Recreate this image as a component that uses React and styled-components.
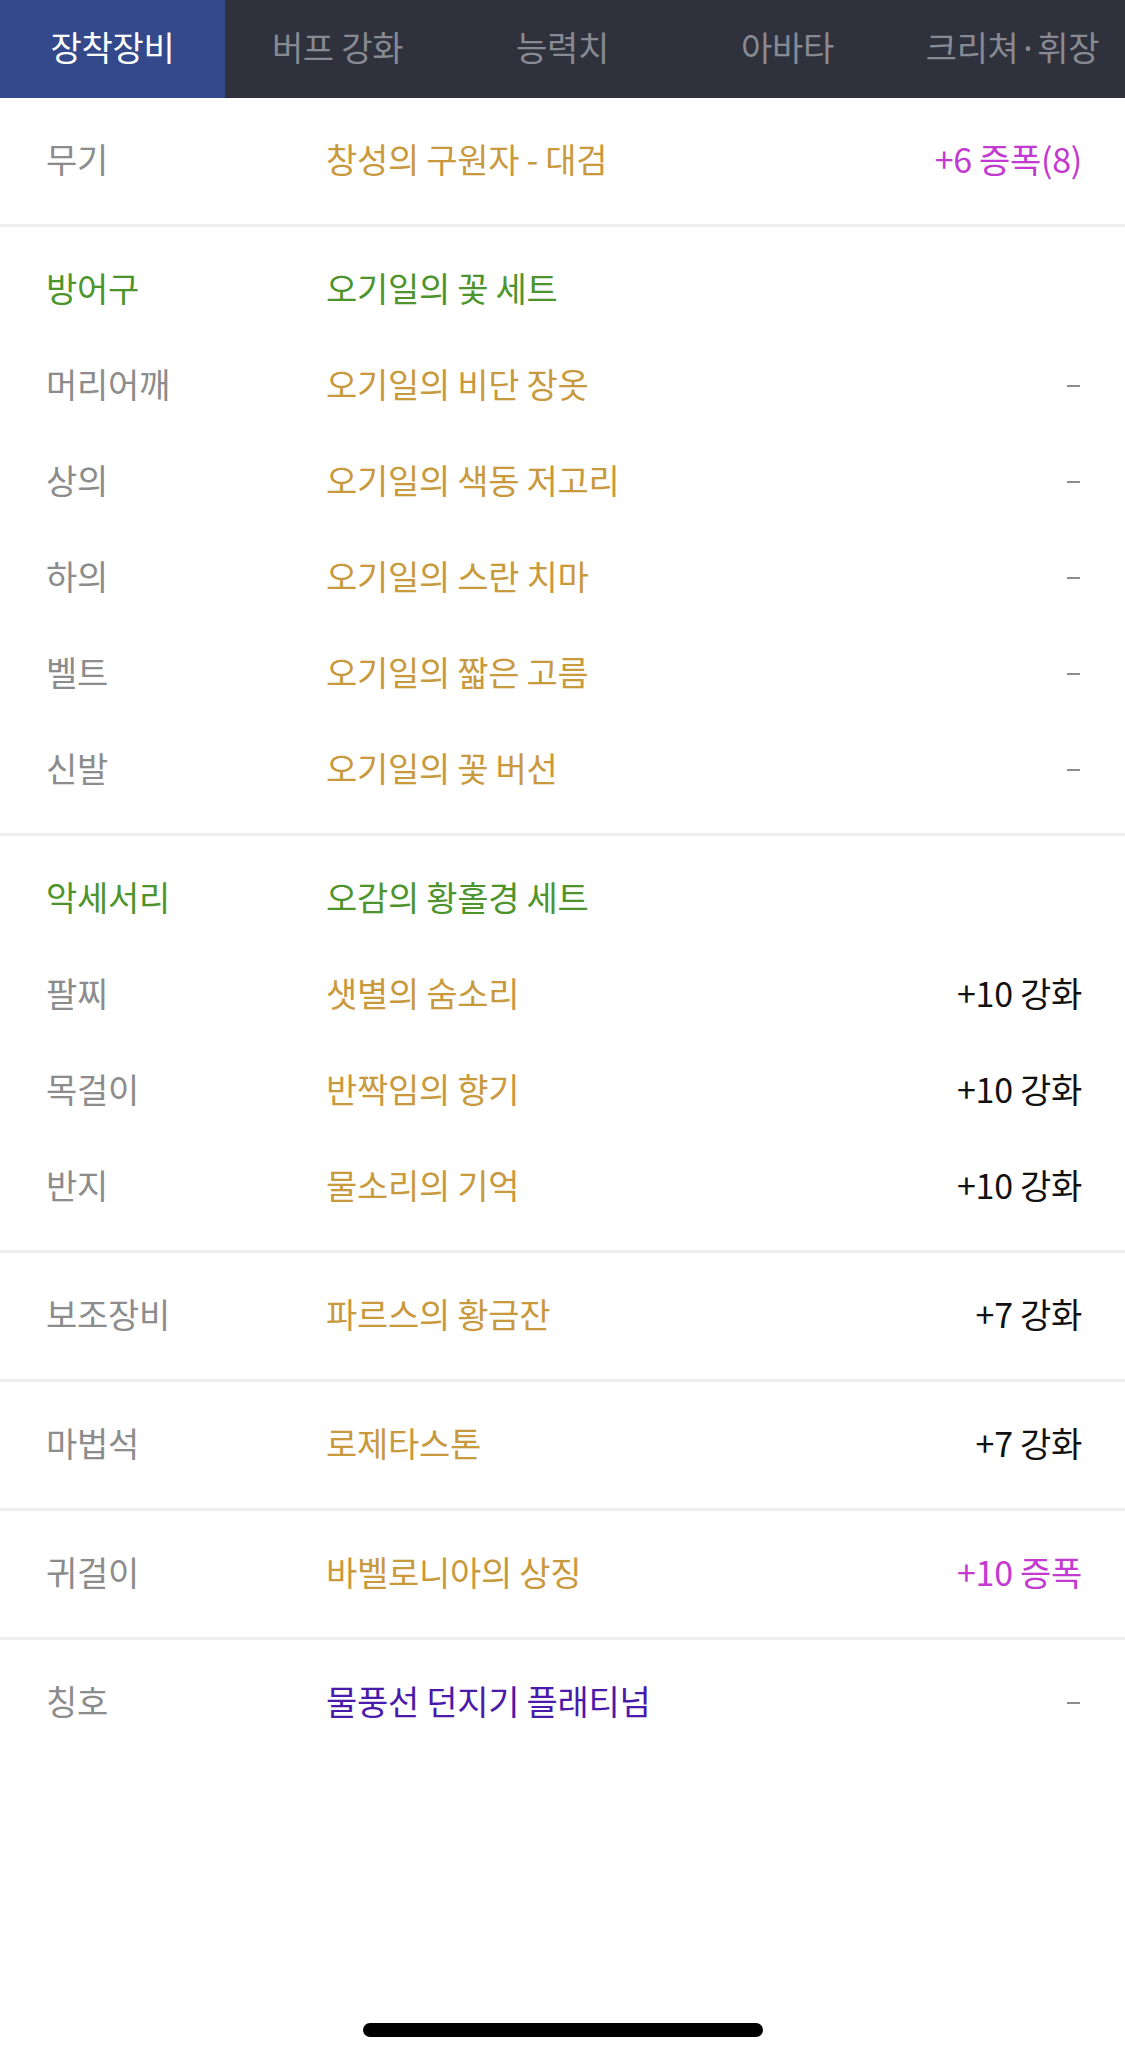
import React from "react";
import styled, { createGlobalStyle } from "styled-components";

const GlobalStyle = createGlobalStyle`
  html, body { margin: 0; padding: 0; background: #ffffff; }
  body { font-family: "Noto Sans CJK KR", "Noto Sans", sans-serif; }
  * { box-sizing: border-box; }
`;

const COLORS = {
  label: "#8c8c8c",
  gold: "#c9993d",
  green: "#4e942c",
  magenta: "#c23ad0",
  purple: "#4a1aab",
  black: "#111111",
};

const Page = styled.div`
  width: 1125px;
  min-height: 2061px;
  display: flex;
  flex-direction: column;
  background: #ffffff;
`;

const TabBar = styled.nav`
  display: grid;
  grid-template-columns: repeat(5, 1fr);
  height: 98px;
  background: #2f323c;
`;

const Tab = styled.div`
  display: flex;
  align-items: center;
  justify-content: center;
  padding-bottom: 5px;
  font-size: 34px;
  letter-spacing: -0.3px;
  color: ${(p) => (p.$active ? "#ffffff" : "#878a93")};
  background: ${(p) => (p.$active ? "#34498a" : "transparent")};
  white-space: nowrap;
`;

const Section = styled.section`
  padding: 15px 0 15px;
  border-bottom: ${(p) => (p.$last ? "none" : "3px solid #eeeeee")};
`;

const Row = styled.div`
  display: grid;
  grid-template-columns: 280px 1fr auto;
  align-items: center;
  height: 96px;
  padding: 0 43px 5px 46px;
  font-size: 34px;
  letter-spacing: -0.3px;
  white-space: nowrap;
`;

const Label = styled.span`
  color: ${(p) => p.$color || COLORS.label};
`;

const Name = styled.span`
  color: ${(p) => p.$color || COLORS.gold};
`;

const Value = styled.span`
  justify-self: end;
  color: ${(p) => p.$color || COLORS.black};
`;

const Dash = styled.span`
  justify-self: end;
  display: block;
  width: 13px;
  height: 2px;
  margin: 5px 2px 0 0;
  background: #8c8c8c;
`;

const Spacer = styled.div`
  flex: 1;
`;

const HomeIndicator = styled.div`
  width: 400px;
  height: 14px;
  border-radius: 7px;
  background: #000000;
  margin: 0 auto 24px;
`;

const tabs = ["장착장비", "버프 강화", "능력치", "아바타", "크리쳐·휘장"];

const sections = [
  [{ label: "무기", name: "창성의 구원자 - 대검", value: "+6 증폭(8)", valueColor: COLORS.magenta }],
  [
    { label: "방어구", name: "오기일의 꽃 세트", labelColor: COLORS.green, nameColor: COLORS.green, noValue: true },
    { label: "머리어깨", name: "오기일의 비단 장옷" },
    { label: "상의", name: "오기일의 색동 저고리" },
    { label: "하의", name: "오기일의 스란 치마" },
    { label: "벨트", name: "오기일의 짧은 고름" },
    { label: "신발", name: "오기일의 꽃 버선" },
  ],
  [
    { label: "악세서리", name: "오감의 황홀경 세트", labelColor: COLORS.green, nameColor: COLORS.green, noValue: true },
    { label: "팔찌", name: "샛별의 숨소리", value: "+10 강화" },
    { label: "목걸이", name: "반짝임의 향기", value: "+10 강화" },
    { label: "반지", name: "물소리의 기억", value: "+10 강화" },
  ],
  [{ label: "보조장비", name: "파르스의 황금잔", value: "+7 강화" }],
  [{ label: "마법석", name: "로제타스톤", value: "+7 강화" }],
  [{ label: "귀걸이", name: "바벨로니아의 상징", value: "+10 증폭", valueColor: COLORS.magenta }],
  [{ label: "칭호", name: "물풍선 던지기 플래티넘", nameColor: COLORS.purple }],
];

export default function App() {
  return (
    <>
      <GlobalStyle />
      <Page>
        <TabBar>
          {tabs.map((t, i) => (
            <Tab key={t} $active={i === 0}>
              {t}
            </Tab>
          ))}
        </TabBar>
        {sections.map((rows, si) => (
          <Section key={si} $last={si === sections.length - 1}>
            {rows.map((r) => (
              <Row key={r.label}>
                <Label $color={r.labelColor}>{r.label}</Label>
                <Name $color={r.nameColor}>{r.name}</Name>
                {r.noValue ? (
                  <span />
                ) : r.value ? (
                  <Value $color={r.valueColor}>{r.value}</Value>
                ) : (
                  <Dash />
                )}
              </Row>
            ))}
          </Section>
        ))}
        <Spacer />
        <HomeIndicator />
      </Page>
    </>
  );
}
